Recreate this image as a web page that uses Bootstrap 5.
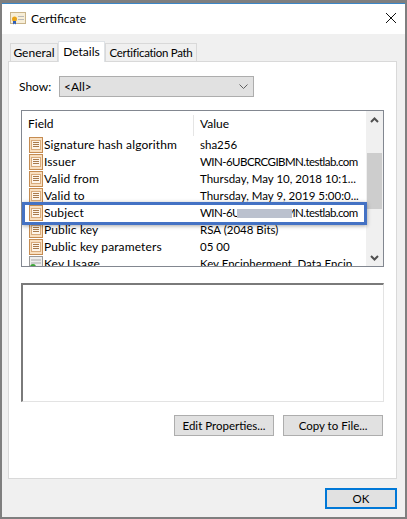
<!DOCTYPE html>
<html lang="en">
<head>
<meta charset="utf-8">
<title>Certificate</title>
<link href="https://cdn.jsdelivr.net/npm/bootstrap@5.3.0/dist/css/bootstrap.min.css" rel="stylesheet">
<style>
html,body{margin:0;background:#fff;}
body{font-family:"Lato","Open Sans","Liberation Sans",sans-serif;font-size:12px;color:#000;line-height:17px;}
.dlg{width:407px;height:519px;border:solid #7f7f7f;border-width:3px 2px 2px 2px;background:#f0f0f0;overflow:hidden;}
.dlg-title{height:31px;background:#fff;border-top:1px solid #3a87c8;padding:0 6px 2px 8px;font-size:12px;}
.ttl-grp{gap:5px;}
.dlg-x{width:16px;height:16px;}
.tabbar{height:27px;padding:7px 0 0 6px;border-bottom:0;}
.tabbar .nav-link{font-size:12px;line-height:17px;color:#000;background:#f0f0f0;border:1px solid #d9d9d9;border-bottom:0;border-radius:0;padding:0;margin:0;height:20px;text-align:center;white-space:nowrap;}
.tabbar .nav-item{margin-top:2px;margin-bottom:0;}
.tabbar .nav-item.on{margin-top:0;z-index:2;margin-bottom:-1px;}
.tabbar .nav-item.on .nav-link{background:#fff;height:21px;padding-top:1px;}
.t1{width:48px;margin-left:2px;}
.t2{width:47px;}
.t3{width:92px;}
.tabbar .t3 .nav-link{font-size:11.5px;letter-spacing:-.3px;}
.pane{height:418px;margin:0 8px 0 6px;background:#fff;border:1px solid #d9d9d9;padding:14px 12px 0;}
.show-row{margin-left:-2px;line-height:15px;}
.show-lbl{width:40px;}
.show-sel{width:195px;height:21px;background-color:#e1e1e1;border:1px solid #adadad;border-radius:0;font-size:12px;line-height:17px;padding:0 0 0 4px;color:#000;background-image:url("data:image/svg+xml,%3Csvg xmlns='http://www.w3.org/2000/svg' viewBox='0 0 9 5'%3E%3Cpath d='M.5.5l4 4 4-4' fill='none' stroke='%23606060'/%3E%3C/svg%3E");background-position:right 5px center;background-size:9px 5px;}
.fieldlist{height:157px;margin-top:13px;border:1px solid #828790;background:#fff;overflow:hidden;position:relative;}
.fl-main{flex:1 1 auto;min-width:0;overflow:hidden;}
.fl-head{height:25px;padding-top:4px;color:#000;}
.fl-c1{width:171px;padding-left:6px;flex:none;}
.fl-c2{padding-left:6px;border-left:1px solid #e5e5e5;}
.fl-row{height:17px;white-space:nowrap;}
.fl-row .c-name{width:171px;flex:none;padding-left:0;display:flex;align-items:center;letter-spacing:.12px;}
.fl-row svg{margin:0 0 0 6px;flex:none;}
.fl-row .c-val{padding-left:7px;font-size:11.5px;}
.fl-row .c-val.wn{letter-spacing:-.55px;}
.sbar{width:18px;background:#f0f0f0;flex:none;border-left:1px solid #fff;}
.sb-btn{height:17px;display:flex;align-items:center;justify-content:center;}
.sb-track{flex:1 1 auto;padding-top:25px;}
.sb-thumb{height:56px;background:#cdcdcd;margin:0 1px;}
.mark-box{position:absolute;left:0;top:91px;width:345px;height:23px;border:3px solid #4472c4;box-shadow:0 1px 4px rgba(0,0,0,.35);pointer-events:none;}
.smudge{position:absolute;left:215px;top:98px;width:55px;height:9px;background:#bbc1ce;}
.detail-box{height:119px;margin-top:16px;background:#fff;border-style:solid;border-color:#7a7a7a #e3e3e3 #e3e3e3 #7a7a7a;border-width:2px 1px 1px 2px;}
.btn-row{margin-top:13px;gap:9px;padding-right:1px;}
.wbtn{background:#e1e1e1;border:1px solid #adadad;border-radius:0;font-size:11.5px;line-height:17px;color:#000;padding:0;height:21px;width:100px;}
.foot{height:37px;padding:9px 8px 0 0;}
.okb{width:72px;height:21px;border:2px solid #0078d7;line-height:15px;}
</style>
</head>
<body>
<svg width="0" height="0" class="position-absolute">
<defs>
<symbol id="ic" viewBox="0 0 16 16">
<rect x="1.500" y="0.500" width="13" height="15" fill="#f8dfc0" stroke="#c58c52"/>
<rect x="3.500" y="3.500" width="9" height="9" fill="#fdf5ea" stroke="#d8ab7c"/>
<path d="M5 5.500h6M5 7.500h6M5 9.500h6" stroke="#a87a4c" stroke-width="1"/>
</symbol>
</defs>
</svg>
<div class="dlg d-flex flex-column">
  <div class="dlg-title d-flex align-items-center justify-content-between">
    <div class="d-flex align-items-center ttl-grp">
      <svg width="16" height="14" viewBox="0 0 16 14"><rect x="0.5" y="1.5" width="15" height="11" fill="#f7eed8" stroke="#c9b48a"/><rect x="8" y="5" width="6" height="1" fill="#b9b9b9"/><rect x="8" y="8" width="6" height="1" fill="#b9b9b9"/><circle cx="4.500" cy="8" r="2.500" fill="#e8a317"/><path d="M3 10v3.500l1.500-1 1.500 1V10z" fill="#2f5fb8"/></svg>
      <span>Certificate</span>
    </div>
    <svg class="dlg-x" viewBox="0 0 16 16"><path d="M3 3l10 10M13 3L3 13" stroke="#111" stroke-width="1" fill="none"/></svg>
  </div>
  <ul class="nav nav-tabs tabbar flex-nowrap">
    <li class="nav-item t1"><a class="nav-link" href="#">General</a></li>
    <li class="nav-item on t2"><a class="nav-link active" href="#">Details</a></li>
    <li class="nav-item t3"><a class="nav-link" href="#">Certification Path</a></li>
  </ul>
  <div class="pane">
    <div class="d-flex align-items-center show-row">
      <span class="show-lbl">Show:</span>
      <select class="form-select show-sel"><option>&lt;All&gt;</option></select>
    </div>
    <div class="fieldlist d-flex">
      <div class="fl-main">
        <div class="fl-head d-flex"><div class="fl-c1">Field</div><div class="fl-c2">Value</div></div>
        <div class="rows">
          <div class="fl-row d-flex"><div class="c-name"><svg width="16" height="16"><use href="#ic"/></svg>Signature hash algorithm</div><div class="c-val">sha256</div></div>
          <div class="fl-row d-flex"><div class="c-name"><svg width="16" height="16"><use href="#ic"/></svg>Issuer</div><div class="c-val wn">WIN-6UBCRCGIBMN.testlab.com</div></div>
          <div class="fl-row d-flex"><div class="c-name"><svg width="16" height="16"><use href="#ic"/></svg>Valid from</div><div class="c-val">Thursday, May 10, 2018 10:1...</div></div>
          <div class="fl-row d-flex"><div class="c-name"><svg width="16" height="16"><use href="#ic"/></svg>Valid to</div><div class="c-val">Thursday, May 9, 2019 5:00:0...</div></div>
          <div class="fl-row d-flex"><div class="c-name"><svg width="16" height="16"><use href="#ic"/></svg>Subject</div><div class="c-val wn">WIN-6UBCRCGIBMN.testlab.com</div></div>
          <div class="fl-row d-flex"><div class="c-name"><svg width="16" height="16"><use href="#ic"/></svg>Public key</div><div class="c-val">RSA (2048 Bits)</div></div>
          <div class="fl-row d-flex"><div class="c-name"><svg width="16" height="16"><use href="#ic"/></svg>Public key parameters</div><div class="c-val">05 00</div></div>
          <div class="fl-row d-flex"><div class="c-name"><svg width="16" height="16" viewBox="0 0 16 16"><rect x="1.500" y="0.500" width="13" height="15" fill="#eee" stroke="#999"/><path d="M3 4h10M3 7h10" stroke="#aaa"/><circle cx="5" cy="11" r="3" fill="#3aa335"/></svg>Key Usage</div><div class="c-val">Key Encipherment, Data Encip...</div></div>
        </div>
      </div>
      <div class="sbar d-flex flex-column">
        <div class="sb-btn"><svg width="9" height="6" viewBox="0 0 9 6"><path d="M1 5l3.500-3.500L8 5" stroke="#505050" stroke-width="2" fill="none"/></svg></div>
        <div class="sb-track"><div class="sb-thumb"></div></div>
        <div class="sb-btn"><svg width="9" height="6" viewBox="0 0 9 6"><path d="M1 1l3.500 3.500L8 1" stroke="#505050" stroke-width="2" fill="none"/></svg></div>
      </div>
      <div class="smudge"></div>
      <div class="mark-box"></div>
    </div>
    <div class="detail-box"></div>
    <div class="d-flex justify-content-end btn-row">
      <button class="btn wbtn" type="button">Edit Properties...</button>
      <button class="btn wbtn" type="button">Copy to File...</button>
    </div>
  </div>
  <div class="foot d-flex justify-content-end">
    <button class="btn wbtn okb" type="button">OK</button>
  </div>
</div>
</body>
</html>
